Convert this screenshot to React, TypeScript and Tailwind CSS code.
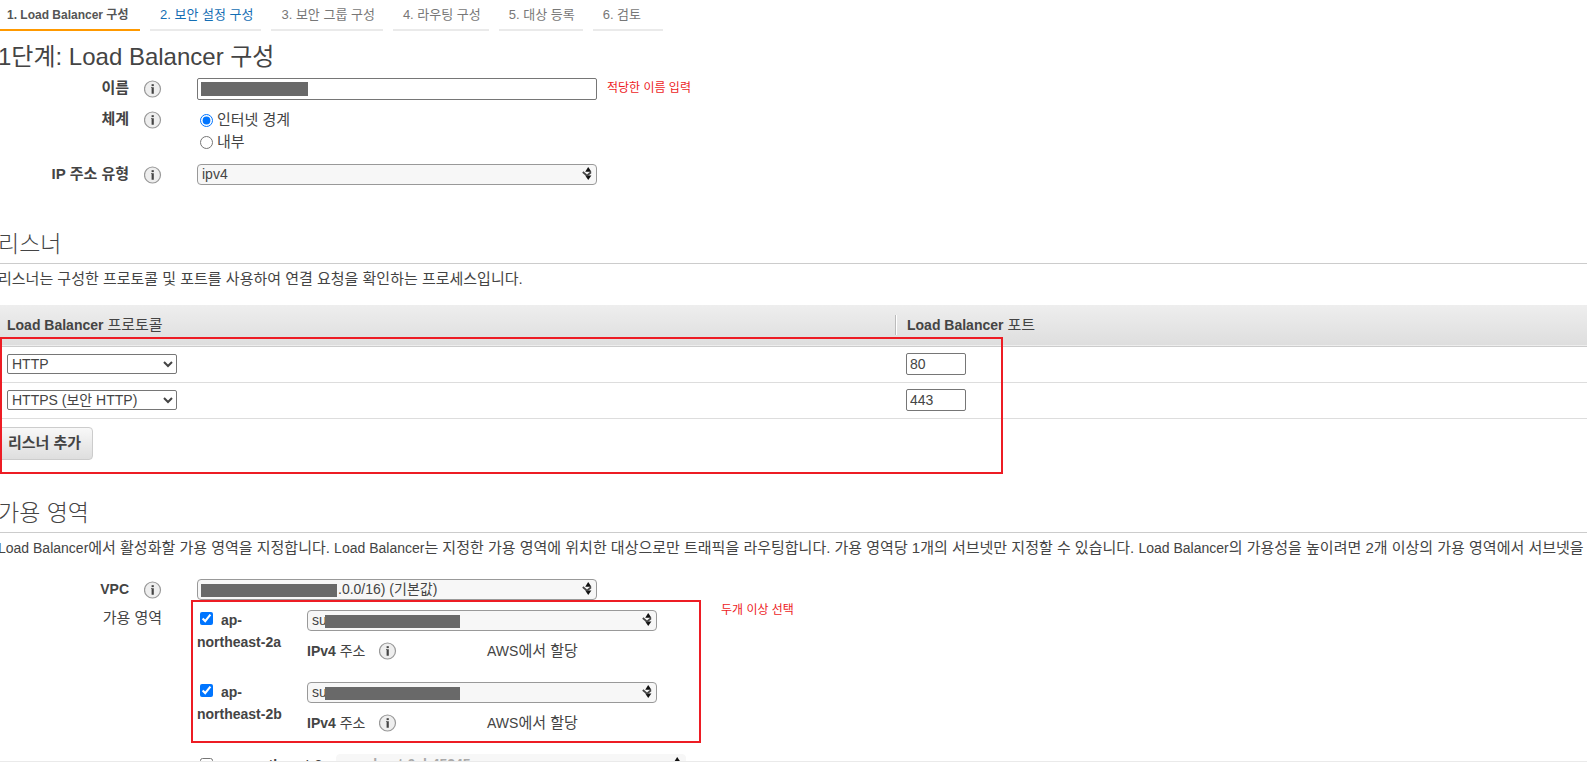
import type { ReactNode } from 'react';

const tabs = [
  '1. Load Balancer 구성',
  '2. 보안 설정 구성',
  '3. 보안 그룹 구성',
  '4. 라우팅 구성',
  '5. 대상 등록',
  '6. 검토',
];

const tabStyles = [
  'w-[143px] -ml-[3px] border-[#ff9900] text-xs leading-5 font-bold text-[#555]',
  'border-[#eaeaea] text-[13px] text-[#146eb4]',
  'border-[#eaeaea] text-[13px] text-[#777]',
  'border-[#eaeaea] text-[13px] text-[#777]',
  'border-[#eaeaea] text-[13px] text-[#777]',
  'border-[#eaeaea] text-[13px] text-[#777]',
];

function InfoIcon({ label }: { label: string }) {
  return (
    <button type="button" aria-label={label} className="block h-[18px] w-[18px] shrink-0">
      <svg viewBox="0 0 18 18" className="h-[18px] w-[18px]">
        <circle cx="8.5" cy="9" r="8" fill="#eeeeee" stroke="#999999" strokeWidth="1.2" />
        <rect x="7.6" y="4.2" width="2.2" height="1.9" fill="#444" />
        <path d="M7 7.3h2.8v6.4H7.6V8.1H7z" fill="#444" />
      </svg>
    </button>
  );
}

function Arrows() {
  return (
    <svg viewBox="0 0 10 13" className="pointer-events-none absolute top-[3px] right-[5px] h-[13px] w-[10px]">
      <path d="M6.2 0 9.4 4.8H3.2z" fill="#111" />
      <path d="M6.2 13 9.4 8.4H3.2z" fill="#111" />
      <path d="M0.8 5 5 8.6 9 5.2" fill="none" stroke="#444" strokeWidth="1.8" />
    </svg>
  );
}

type PickerProps = {
  label: string;
  value: string;
  width: string;
  pad?: string;
  mask?: string;
  disabled?: boolean;
};

function Picker({ label, value, width, pad = 'pl-1', mask, disabled }: PickerProps) {
  return (
    <div className={`relative h-[21px] ${width}`}>
      <select
        aria-label={label}
        disabled={disabled}
        className={`block h-[21px] w-full appearance-none rounded-[4px] border bg-[#f7f7f7] pr-5 text-sm leading-[19px] ${pad} ${
          disabled ? 'border-[#f7f7f7] text-[#aaa]' : 'border-[#999] text-[#444]'
        }`}
      >
        <option>{value}</option>
      </select>
      {mask && <span className={`absolute top-[5px] h-[13px] bg-[#696969] ${mask}`} />}
      <Arrows />
    </div>
  );
}

function Field({ label, children, htmlFor }: { label: string; children: ReactNode; htmlFor?: string }) {
  const size = label === 'VPC' ? 'text-sm' : 'text-[15px]';
  return (
    <div className="flex items-start">
      <label htmlFor={htmlFor} className={`w-[129px] shrink-0 text-right font-bold ${size} leading-5`}>
        {label}
      </label>
      <div className="w-[68px] shrink-0 pt-[2px] pl-[15px]">
        <InfoIcon label={`${label} 정보`} />
      </div>
      {children}
    </div>
  );
}

function SectionTitle({ children }: { children: ReactNode }) {
  return (
    <h2 className="-ml-[2px] border-b border-[#ccc] pt-px pb-[3px] text-[23px] leading-8 font-light">{children}</h2>
  );
}

function Zone({ name }: { name: string }) {
  return (
    <div className="flex h-[72px] items-start">
      <label className="-mt-px w-[110px] shrink-0 leading-[22px] font-bold">
        <input type="checkbox" defaultChecked className="mr-2 ml-[3px] h-[13px] w-[13px] accent-[#0075ff]" />
        ap-
        <br />
        northeast-{name}
      </label>
      <div>
        <Picker label={`ap-northeast-${name} 서브넷`} value="su" width="w-[350px]" mask="left-[18px] w-[135px]" />
        <div className="mt-[10px] flex items-center leading-5">
          <span className="w-[72px]">
            <b>IPv4</b> 주소
          </span>
          <InfoIcon label="IPv4 주소 정보" />
          <span className="ml-[90px]">
            AWS<span className="text-[15px]">에서 할당</span>
          </span>
        </div>
      </div>
    </div>
  );
}

const listeners = [
  { protocol: 'HTTP', port: '80' },
  { protocol: 'HTTPS (보안 HTTP)', port: '443' },
];

export default function App() {
  return (
    <div className="flex h-screen flex-col overflow-hidden bg-white font-['Liberation_Sans','Noto_Sans_CJK_KR',sans-serif] text-sm text-[#444]">
      <main className="min-h-0 flex-1 overflow-hidden">
        <nav className="flex gap-[10px] leading-5">
          {tabs.map((tab, i) => (
            <a
              key={tab}
              href={`#step-${i + 1}`}
              className={`h-[31px] min-w-[70px] border-b-2 pt-[5px] pr-2 pl-[10px] whitespace-nowrap ${tabStyles[i]}`}
            >
              {tab}
            </a>
          ))}
        </nav>

        <h1 className="-ml-[2px] pt-[10px] text-2xl leading-8">1단계: Load Balancer 구성</h1>

        <div className="flex flex-col pt-[5px]">
          <Field label="이름" htmlFor="lb-name">
            <div className="relative w-[400px]">
              <input
                id="lb-name"
                className="block h-[22px] w-full rounded-[2px] border border-[#767676] px-1 text-sm"
              />
              <span className="absolute top-[4px] left-1 h-[14px] w-[107px] bg-[#696969]" />
            </div>
            <span className="ml-[10px] text-xs leading-5 text-[#ed1c24]">적당한 이름 입력</span>
          </Field>
          <div className="mt-[9px]">
            <Field label="체계">
              <div className="flex flex-col text-[15px] leading-[22px]">
                <label className="flex items-center gap-1">
                  <input type="radio" name="scheme" defaultChecked className="ml-[3px] h-[13px] w-[13px] accent-[#0075ff]" />
                  인터넷 경계
                </label>
                <label className="flex items-center gap-1">
                  <input type="radio" name="scheme" className="ml-[3px] h-[13px] w-[13px]" />
                  내부
                </label>
              </div>
            </Field>
          </div>
          <div className="mt-[11px]">
            <Field label="IP 주소 유형">
              <Picker label="IP 주소 유형" value="ipv4" width="w-[400px]" />
            </Field>
          </div>
        </div>

        <section className="pt-[42px]">
          <SectionTitle>리스너</SectionTitle>
          <p className="-ml-[2px] pt-[5px] text-[15px] leading-5">
            리스너는 구성한 프로토콜 및 포트를 사용하여 연결 요청을 확인하는 프로세스입니다.
          </p>
          <div className="relative mt-4">
            <table className="w-full table-fixed border-collapse text-left">
              <thead>
                <tr className="h-[41px] border-b border-[#ccc] bg-linear-to-b from-[#eeeeee] to-[#dedede]">
                  <th className="w-[896px] p-0 pl-[7px]">
                    <div className="border-r border-[#bbb] leading-5">
                      Load Balancer <span className="text-[15px] font-normal">프로토콜</span>
                    </div>
                  </th>
                  <th className="p-0">
                    <div className="border-l border-white pl-[10px] leading-5">
                      Load Balancer <span className="text-[15px] font-normal">포트</span>
                    </div>
                  </th>
                </tr>
              </thead>
              <tbody>
                {listeners.map((l) => (
                  <tr key={l.port} className="h-9 border-b border-[#ddd]">
                    <td className="p-0 pl-[7px]">
                      <select
                        aria-label="프로토콜"
                        className="block h-5 w-[170px] rounded-[2px] border border-[#767676] bg-white text-sm leading-4"
                      >
                        <option>{l.protocol}</option>
                      </select>
                    </td>
                    <td className="p-0 pl-[10px]">
                      <input
                        aria-label="포트"
                        defaultValue={l.port}
                        className="block h-[22px] w-[60px] rounded-[2px] border border-[#767676] px-[3px] text-sm"
                      />
                    </td>
                  </tr>
                ))}
              </tbody>
            </table>
            <button
              type="button"
              className="mt-2 -ml-1 block h-[33px] rounded-[4px] border border-[#ccc] bg-linear-to-b from-[#f8f8f8] to-[#dedede] px-[11px] text-[15px] font-bold"
            >
              리스너 추가
            </button>
            <div className="pointer-events-none absolute top-8 left-0 h-[137px] w-[1003px] border-2 border-[#ed1c24]" />
          </div>
        </section>

        <section className="pt-9">
          <SectionTitle>가용 영역</SectionTitle>
          <p className="-ml-[2px] overflow-hidden pt-[5px] text-[15px] leading-5 whitespace-nowrap">
            <span className="text-sm">Load Balancer</span>에서 활성화할 가용 영역을 지정합니다.{' '}
            <span className="text-sm">Load Balancer</span>는 지정한 가용 영역에 위치한 대상으로만 트래픽을 라우팅합니다. 가용
            영역당 1개의 서브넷만 지정할 수 있습니다. <span className="text-sm">Load Balancer</span>의 가용성을 높이려면 2개
            이상의 가용 영역에서 서브넷을
          </p>
          <div className="pt-[21px]">
            <Field label="VPC">
              <Picker
                label="VPC"
                value=".0.0/16) (기본값)"
                width="w-[400px]"
                pad="pl-[140px]"
                mask="left-1 w-[136px]"
              />
            </Field>
          </div>
          <div className="relative flex items-start">
            <span className="w-[162px] shrink-0 pt-2 text-right text-[15px] leading-5">가용 영역</span>
            <div className="pt-[10px] pl-[35px]">
              <Zone name="2a" />
              <Zone name="2b" />
              <label className="flex items-center font-bold">
                <input type="checkbox" className="mr-3 ml-[3px] h-[13px] w-[13px]" />
                <span className="w-[111px] pt-px">ap-northeast-2c</span>
                <Picker label="ap-northeast-2c 서브넷" value="subnet-0ab45245" width="w-[350px]" pad="pl-5" disabled />
              </label>
            </div>
            <span className="ml-[35px] text-xs leading-5 text-[#ed1c24]">두개 이상 선택</span>
            <div className="pointer-events-none absolute top-0 left-[191px] h-[143px] w-[510px] border-2 border-[#ed1c24]" />
          </div>
        </section>
      </main>
      <footer className="h-[11px] shrink-0 border-t border-[#eaeaea]" />
    </div>
  );
}
